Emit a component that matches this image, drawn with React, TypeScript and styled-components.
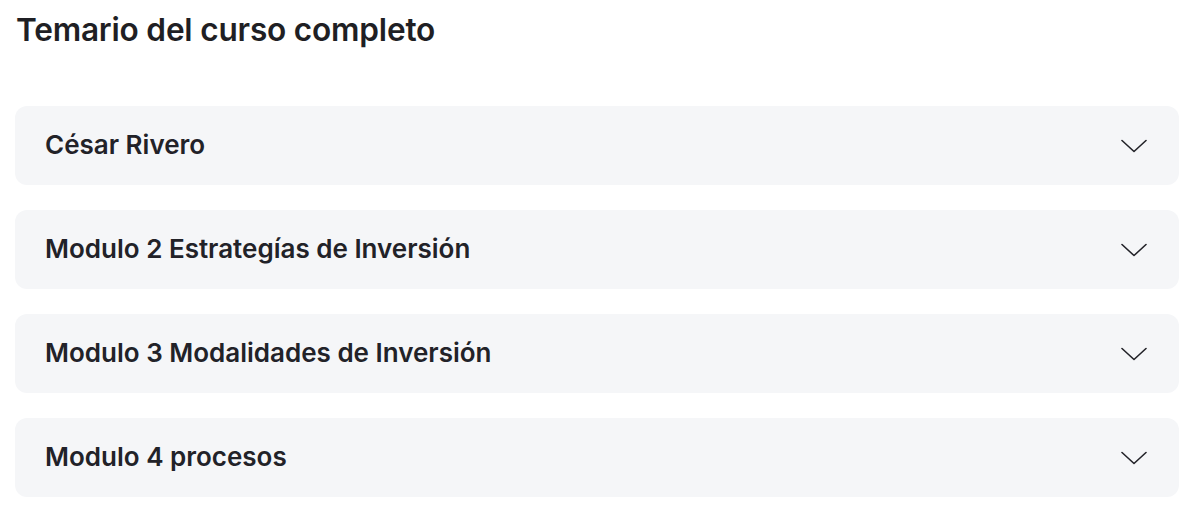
import React from "react";
import styled, { createGlobalStyle } from "styled-components";

const GlobalStyle = createGlobalStyle`
  body {
    margin: 0;
    background: #ffffff;
    font-family: Inter, "Noto Sans", sans-serif;
  }
`;

const Page = styled.div`
  padding: 10px 12px 0 15px;
`;

const Heading = styled.h2`
  margin: 0 0 56px 1px;
  font-size: 31.6px;
  line-height: 40px;
  font-weight: 600;
  color: #1f1f24;
  letter-spacing: -0.2px;
`;

const List = styled.div`
  display: flex;
  flex-direction: column;
  gap: 25px;
`;

const Item = styled.div`
  display: flex;
  align-items: center;
  justify-content: space-between;
  height: 79px;
  padding: 0 32px 2px 30px;
  box-sizing: border-box;
  background: #f5f6f8;
  border-radius: 12px;
  cursor: pointer;
`;

const ItemTitle = styled.span`
  font-size: 26px;
  font-weight: 600;
  color: #222228;
  letter-spacing: 0;
`;

const Chevron = styled.svg`
  width: 26px;
  height: 14px;
  flex-shrink: 0;
  margin-top: 2px;
`;

const modules = [
  "César Rivero",
  "Modulo 2 Estrategías de Inversión",
  "Modulo 3 Modalidades de Inversión",
  "Modulo 4 procesos",
];

const App = (): JSX.Element => {
  return (
    <Page>
      <GlobalStyle />
      <Heading>Temario del curso completo</Heading>
      <List>
        {modules.map((title) => (
          <Item key={title}>
            <ItemTitle>{title}</ItemTitle>
            <Chevron viewBox="0 0 26 14" fill="none">
              <path
                d="M1 1.5L13 12.5L25 1.5"
                stroke="#222228"
                strokeWidth="1.6"
                strokeLinecap="round"
                strokeLinejoin="round"
              />
            </Chevron>
          </Item>
        ))}
      </List>
    </Page>
  );
};

export default App;
